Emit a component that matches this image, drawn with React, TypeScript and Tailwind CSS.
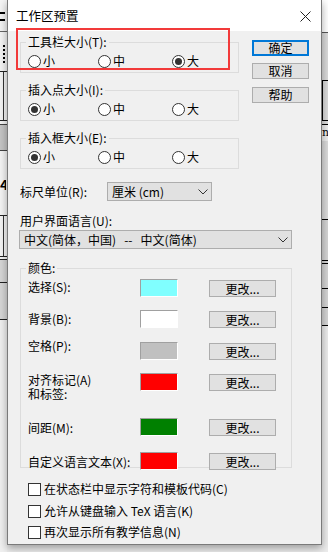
import React from "react";

const Radio = ({ checked }: { checked?: boolean }) => (
  <span className="w-[13px] h-[13px] rounded-full border border-[#333] bg-white flex items-center justify-center shrink-0">
    {checked && <span className="w-[7px] h-[7px] rounded-full bg-[#333]" />}
  </span>
);

const RadioGroup = ({ label, sel, topPad }: { label: string; sel: number; topPad: string }) => (
  <div className={`relative h-[31px] border border-[#dcdcdc] ${topPad}`}>
    <span className="absolute left-[5px] top-[-8px] px-[2px] bg-[#f0f0f0] leading-[14px] whitespace-nowrap">{label}</span>
    <div className="flex items-center pl-[7px]">
      {["小", "中", "大"].map((t, i) => (
        <div key={t} className={`flex items-center gap-[2px] ${i === 0 ? "w-[70px]" : i === 1 ? "w-[74px]" : ""}`}>
          <Radio checked={i === sel} />
          <span className="leading-[14px]">{t}</span>
        </div>
      ))}
    </div>
  </div>
);

const Btn = ({ children, def, cls }: { children: React.ReactNode; def?: boolean; cls?: string }) => (
  <div
    className={`w-[57px] h-[16px] bg-[#e1e1e1] flex items-center justify-center leading-[14px] ${
      def ? "border-2 border-[#0078d7]" : "border border-[#adadad]"
    } ${cls || ""}`}
  >
    {children}
  </div>
);

const Chevron = () => (
  <svg width="10" height="6" viewBox="0 0 10 6" className="shrink-0">
    <path d="M0.5 0.5 L5 5 L9.5 0.5" stroke="#333" strokeWidth="1" fill="none" />
  </svg>
);

const ColorRow = ({
  label,
  color,
  rowMt,
  labelMt,
}: {
  label: React.ReactNode;
  color: string;
  rowMt: string;
  labelMt: string;
}) => (
  <div className={`flex items-start ${rowMt}`}>
    <div className={`w-[119px] pl-[7px] leading-[14px] ${labelMt}`}>{label}</div>
    <div
      className="w-[38px] h-[18px] border-t border-l border-t-[#a0a0a0] border-l-[#a0a0a0] border-r border-b border-r-white border-b-white"
      style={{ backgroundColor: color }}
    />
    <div className="ml-[31px] mt-[1px] w-[67px] h-[17px] bg-[#e1e1e1] border border-[#adadad] flex items-center justify-center leading-[14px]">
      更改...
    </div>
  </div>
);

const Check = ({ label, cls }: { label: string; cls?: string }) => (
  <div className={`flex items-center pl-[8px] ${cls || ""}`}>
    <span className="w-[13px] h-[13px] border border-[#333] bg-white shrink-0" />
    <span className="ml-[3px] leading-[14px]">{label}</span>
  </div>
);

const LeftStrip = () => (
  <div className="w-[7px] h-[552px] shrink-0 bg-[#f4f4f4] flex flex-col">
    <div className="h-[12px]" />
    <div className="h-[2px] w-[5px] bg-black" />
    <div className="h-[5px]" />
    <div className="h-[2px] w-[5px] bg-black" />
    <div className="h-[10px]" />
    <div className="h-[1px] bg-[#666]" />
    <div className="h-[13px]" />
    <div className="h-[18px] w-[5px] border-r-2 border-dotted border-black" />
    <div className="h-[8px]" />
    <div className="h-[1px] bg-[#222]" />
    <div className="h-[48px] w-[4px] border-r border-[#333]" />
    <div className="h-[1px] bg-[#222]" />
    <div className="h-[3px]" />
    <div className="h-[1px] bg-[#444]" />
    <div className="h-[25px] bg-[#c4c4c4]" />
    <div className="h-[1px] bg-[#444]" />
    <div className="h-[26px]" />
    <div className="h-[14px] w-[6px] text-[14px] leading-[14px] font-bold overflow-hidden">4</div>
    <div className="h-[24px]" />
    <div className="h-[1px] bg-[#222]" />
    <div className="h-[40px] w-[4px] border-r border-[#333]" />
    <div className="h-[1px] bg-[#222]" />
    <div className="h-[2px]" />
    <div className="h-[1px] bg-[#222]" />
    <div className="h-[22px] bg-[#d6d6d6]" />
    <div className="h-[1px] bg-[#222]" />
    <div className="h-[36px] bg-[#d6d6d6]" />
    <div className="h-[1px] bg-[#222]" />
    <div className="flex-1 bg-[#f0f0f0]" />
  </div>
);

const RightStrip = () => (
  <div className="w-[6px] h-[552px] shrink-0 bg-[#ececec] flex flex-col">
    <div className="h-[32px] bg-white" />
    <div className="h-[1px] bg-[#555]" />
    <div className="h-[47px] bg-[#dadada]" />
    <div className="h-[1px] bg-black" />
    <div className="h-[39px] border-l border-black bg-[#dadada]" />
    <div className="h-[1px] bg-black" />
    <div className="h-[3px] bg-[#dadada]" />
    <div className="h-[1px] bg-black" />
    <div className="h-[16px] text-[11px] leading-[16px] overflow-hidden whitespace-nowrap font-['DejaVu_Serif',serif]">ne</div>
    <div className="h-[78px] bg-[#dadada]" />
    <div className="h-[1px] bg-black" />
    <div className="h-[40px] bg-[#d4d4d4]" />
    <div className="h-[1px] bg-black" />
    <div className="h-[2px] bg-[#d4d4d4]" />
    <div className="h-[1px] bg-black" />
    <div className="h-[24px] bg-[#d4d4d4]" />
    <div className="h-[1px] bg-black" />
    <div className="h-[18px] bg-[#d4d4d4]" />
    <div className="h-[1px] bg-black" />
    <div className="h-[17px] bg-[#d4d4d4]" />
    <div className="h-[1px] bg-black" />
    <div className="flex-1 bg-[#ececec]" />
  </div>
);

export default function App() {
  return (
    <div className="w-[328px] h-[552px] flex items-start overflow-hidden bg-[#ececec] text-[12px] text-black font-['Noto_Sans_CJK_SC','Noto_Sans',sans-serif]">
      <LeftStrip />
      <div className="relative w-[315px] h-[545px] shrink-0 border-x border-b border-[#7a7a7a] bg-[#f0f0f0] shadow-[0_3px_8px_rgba(0,0,0,0.35)] flex flex-col">
        {/* title bar */}
        <div className="h-[31px] bg-white flex items-center justify-between pl-[8px] pr-[10px]">
          <span className="text-[12.5px] leading-[16px] mt-[1px]">工作区预置</span>
          <svg width="11" height="11" viewBox="0 0 11 11" className="mt-[1px]">
            <path d="M0.5 0.5 L10.5 10.5 M10.5 0.5 L0.5 10.5" stroke="#222" strokeWidth="1" />
          </svg>
        </div>

        {/* body */}
        <div className="flex flex-col px-[12px]">
          <div className="flex items-start gap-[13px]">
            <div className="w-[219px] mt-[11px] flex flex-col gap-[17px]">
              <RadioGroup label="工具栏大小(T):" sel={2} topPad="pt-[11px]" />
              <RadioGroup label="插入点大小(I):" sel={0} topPad="pt-[11px]" />
              <RadioGroup label="插入框大小(E):" sel={0} topPad="pt-[11px]" />
            </div>
            <div className="flex flex-col mt-[9px]">
              <Btn def>确定</Btn>
              <Btn cls="mt-[7px]">取消</Btn>
              <Btn cls="mt-[8px]">帮助</Btn>
            </div>
          </div>

          {/* ruler unit */}
          <div className="flex items-center mt-[13px]">
            <span className="w-[87px] leading-[14px]">标尺单位(R):</span>
            <div className="w-[105px] h-[19px] bg-[#e1e1e1] border border-[#adadad] flex items-center justify-between pl-[4px] pr-[3px]">
              <span className="leading-[14px]">厘米 (cm)</span>
              <Chevron />
            </div>
          </div>

          {/* UI language */}
          <span className="mt-[13px] leading-[14px]">用户界面语言(U):</span>
          <div className="mt-[2px] -ml-px w-[273px] h-[19px] bg-[#e1e1e1] border border-[#adadad] flex items-center justify-between pl-[4px] pr-[3px]">
            <span className="leading-[14px] whitespace-pre">中文(简体，中国)   --   中文(简体)</span>
            <Chevron />
          </div>

          {/* colours */}
          <div className="relative mt-[19px] w-[272px] h-[200px] border border-[#dcdcdc] flex flex-col">
            <span className="absolute left-[5px] top-[-8px] px-[2px] bg-[#f0f0f0] leading-[14px]">颜色:</span>
            <ColorRow label="选择(S):" color="#80ffff" rowMt="mt-[10px]" labelMt="mt-[1px]" />
            <ColorRow label="背景(B):" color="#ffffff" rowMt="mt-[13px]" labelMt="mt-[2px]" />
            <ColorRow label="空格(P):" color="#c0c0c0" rowMt="mt-[14px]" labelMt="-mt-[3px]" />
            <ColorRow
              label={
                <>
                  对齐标记(A)
                  <br />
                  和标签:
                </>
              }
              color="#ff0000"
              rowMt="mt-[13px]"
              labelMt="mt-0"
            />
            <ColorRow label="间距(M):" color="#008000" rowMt="mt-[17px]" labelMt="mt-[3px]" />
            <ColorRow label="自定义语言文本(X):" color="#ff0000" rowMt="mt-[16px]" labelMt="mt-[3px]" />
          </div>

          <Check label="在状态栏中显示字符和模板代码(C)" cls="mt-[14px]" />
          <Check label="允许从键盘输入 TeX 语言(K)" cls="mt-[8px]" />
          <Check label="再次显示所有教学信息(N)" cls="mt-[7px]" />
        </div>

        {/* red annotation overlay */}
        <div className="absolute left-[8px] top-[28px] w-[214px] h-[42px] border-2 border-[#f23a3a] pointer-events-none" />
      </div>
      <RightStrip />
    </div>
  );
}
